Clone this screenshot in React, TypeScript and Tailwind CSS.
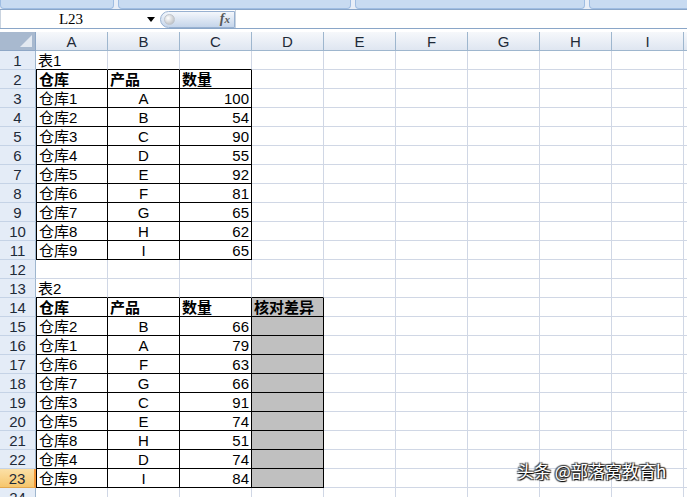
import React from 'react';

const cols = ['A', 'B', 'C', 'D', 'E', 'F', 'G', 'H', 'I'];

type CellDef = {
  text?: string;
  align?: 'left' | 'center' | 'right';
  bold?: boolean;
  box?: boolean;
  gray?: boolean;
  edgeLeft?: boolean;
  edgeBottom?: boolean;
};

const t1 = [
  ['仓库1', 'A', '100'],
  ['仓库2', 'B', '54'],
  ['仓库3', 'C', '90'],
  ['仓库4', 'D', '55'],
  ['仓库5', 'E', '92'],
  ['仓库6', 'F', '81'],
  ['仓库7', 'G', '65'],
  ['仓库8', 'H', '62'],
  ['仓库9', 'I', '65'],
];

const t2 = [
  ['仓库2', 'B', '66'],
  ['仓库1', 'A', '79'],
  ['仓库6', 'F', '63'],
  ['仓库7', 'G', '66'],
  ['仓库3', 'C', '91'],
  ['仓库5', 'E', '74'],
  ['仓库8', 'H', '51'],
  ['仓库4', 'D', '74'],
  ['仓库9', 'I', '84'],
];

function buildRows(): CellDef[][] {
  const rows: CellDef[][] = [];
  rows.push([{ text: '表1', edgeBottom: true }, { edgeBottom: true }, { edgeBottom: true }]);
  rows.push([
    { text: '仓库', bold: true, box: true, edgeLeft: true },
    { text: '产品', bold: true, box: true },
    { text: '数量', bold: true, box: true },
  ]);
  t1.forEach(r =>
    rows.push([
      { text: r[0], box: true, edgeLeft: true },
      { text: r[1], box: true, align: 'center' },
      { text: r[2], box: true, align: 'right' },
    ])
  );
  rows.push([]);
  rows.push([
    { text: '表2', edgeBottom: true },
    { edgeBottom: true },
    { edgeBottom: true },
    { edgeBottom: true },
  ]);
  rows.push([
    { text: '仓库', bold: true, box: true, edgeLeft: true },
    { text: '产品', bold: true, box: true },
    { text: '数量', bold: true, box: true },
    { text: '核对差异', bold: true, box: true, gray: true },
  ]);
  t2.forEach(r =>
    rows.push([
      { text: r[0], box: true, edgeLeft: true },
      { text: r[1], box: true, align: 'center' },
      { text: r[2], box: true, align: 'right' },
      { box: true, gray: true },
    ])
  );
  rows.push([]);
  return rows;
}

function Cell({ c }: { c?: CellDef }) {
  const d = c || {};
  const align =
    d.align === 'center' ? 'justify-center' : d.align === 'right' ? 'justify-end' : 'justify-start';
  return (
    <div
      className={[
        'h-[19px] w-[72px] shrink-0 flex items-center overflow-hidden whitespace-nowrap px-[2px] pt-[1px] border-r border-b',
        align,
        d.box ? 'border-r-black border-b-black' : 'border-r-[#d0d7e5] border-b-[#d0d7e5]',
        d.edgeBottom ? 'border-b-black' : '',
        d.edgeLeft ? 'border-l border-l-black' : '',
        d.gray ? 'bg-[#c0c0c0]' : 'bg-white',
        d.bold ? 'font-bold' : '',
      ].join(' ')}
    >
      {d.text}
    </div>
  );
}

function Tabs() {
  return (
    <div className="h-[9px] flex gap-[4px] bg-[#e8eef7]">
      <div className="w-[114px] bg-[#c8dbf1] border-x border-b border-[#9fbde2] rounded-b-[4px]" />
      <div className="w-[233px] bg-[#c8dbf1] border-x border-b border-[#9fbde2] rounded-b-[4px]" />
      <div className="w-[230px] bg-[#c8dbf1] border-x border-b border-[#9fbde2] rounded-b-[4px]" />
      <div className="flex-1 bg-[#c8dbf1] border-l border-b border-[#9fbde2] rounded-bl-[4px]" />
    </div>
  );
}

function FormulaBar() {
  return (
    <div className="h-[20px] flex items-center border-y border-[#8aa6c8] bg-white">
      <div className="w-[157px] h-full flex items-center border-l border-[#c9d3df]">
        <span className="w-[140px] text-center text-[15px] font-['Liberation_Serif',serif] text-black leading-none">
          L23
        </span>
        <span className="w-0 h-0 border-x-[4px] border-x-transparent border-t-[5px] border-t-black ml-[6px]" />
      </div>
      <div className="ml-[3px] w-[75px] h-[17px] rounded-l-full border border-[#98b1d1] bg-gradient-to-b from-[#f4f7fc] to-[#c5d5ea] flex items-center justify-between pl-[3px] pr-[4px]">
        <span className="w-[11px] h-[11px] rounded-full bg-[radial-gradient(circle_at_35%_35%,#ffffff,#aeb2b8)] border border-[#c0c5cc]" />
        <span className="italic font-['Liberation_Serif',serif] text-[14px] font-bold text-[#585858] leading-none">
          f<span className="text-[11px]">x</span>
        </span>
      </div>
      <div className="flex-1 h-full border-l border-[#c9d3df]" />
    </div>
  );
}

export default function App() {
  const rows = buildRows();
  return (
    <div className="w-[687px] h-[497px] overflow-hidden bg-white relative font-['Liberation_Sans','Noto_Sans_CJK_SC',sans-serif] text-[15px] text-black leading-none">
      <Tabs />
      <FormulaBar />
      <div className="h-[3px] bg-white" />
      {/* column headers */}
      <div className="flex h-[19px]">
        <div className="w-[36px] shrink-0 h-full bg-[#a8b9cf] border-r border-b border-[#8ea7c6] relative">
          <div className="absolute right-[3px] bottom-[3px] w-0 h-0 border-l-[12px] border-l-transparent border-b-[12px] border-b-[#e3e9f1]" />
        </div>
        {cols.map(c => (
          <div
            key={c}
            className="w-[72px] shrink-0 h-full flex items-center justify-center pt-[1px] bg-gradient-to-b from-[#f6f8fb] to-[#dfe6f1] border-r border-b border-[#9eb6ce] text-[#1e2a38] text-[15px]"
          >
            {c}
          </div>
        ))}
        <div className="flex-1 h-full bg-gradient-to-b from-[#f6f8fb] to-[#dfe6f1] border-b border-[#9eb6ce]" />
      </div>
      {rows.map((r, i) => {
        const n = i + 1;
        const sel = n === 23;
        return (
          <div key={n} className="flex h-[19px]">
            <div
              className={
                'w-[36px] shrink-0 h-full flex items-center justify-center pt-[1px] text-[15px] border-b ' +
                (sel
                  ? 'bg-gradient-to-b from-[#fbe0a6] to-[#f6c66c] border-r-2 border-r-[#f29536] border-b-[#e2a74f] text-[#1e2a38]'
                  : 'bg-[#e4ecf7] border-r border-r-[#9eb6ce] border-b-[#c5d3e6] text-[#1e2a38]')
              }
            >
              {n}
            </div>
            {cols.map((c, j) => (
              <Cell key={c} c={r[j]} />
            ))}
            <div className="flex-1 h-full border-b border-[#d0d7e5]" />
          </div>
        );
      })}
      <div className="absolute left-[517px] top-[462px] text-[17px] text-white font-['Noto_Sans_CJK_SC',sans-serif] whitespace-nowrap [text-shadow:1px_1px_1px_#000,-1px_-1px_1px_#444,1px_-1px_1px_#444,-1px_1px_1px_#444]">
        头条 @部落窝教育h
      </div>
    </div>
  );
}
